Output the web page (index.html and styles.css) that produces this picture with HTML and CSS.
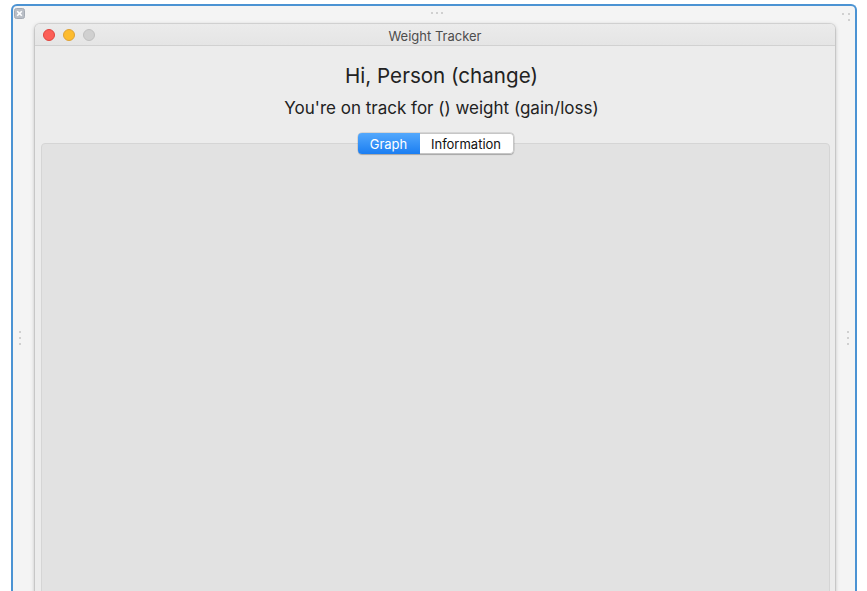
FILE: index.html
```html
<!DOCTYPE html>
<html>
<head>
<meta charset="utf-8">
<link rel="stylesheet" href="styles.css">
</head>
<body>
<div class="frame">
  <div class="frame-close"><svg width="11" height="11" viewBox="0 0 11 11"><rect x="0.5" y="0.5" width="10" height="10" rx="2" fill="#b9bec6" stroke="#a4aab3"/><path d="M3.2 3.2 L7.8 7.8 M7.8 3.2 L3.2 7.8" stroke="#fff" stroke-width="1.6"/></svg></div>
  <div class="frame-dots-top"><i></i><i></i><i></i></div>
  <div class="frame-dots-corner"><i class="a"></i><i class="b"></i><i class="c"></i></div>
  <div class="frame-dots-side left"><i></i><i></i><i></i></div>
  <div class="frame-dots-side right"><i></i><i></i><i></i></div>
  <div class="window">
    <div class="titlebar">
      <div class="lights"><span class="red"></span><span class="yellow"></span><span class="gray"></span></div>
      <div class="title">Weight Tracker</div>
    </div>
    <div class="body">
      <h1 class="greeting">Hi, Person (change)</h1>
      <p class="status">You're on track for () weight (gain/loss)</p>
      <div class="tabs">
        <div class="segmented">
          <span class="seg active">Graph</span>
          <span class="seg">Information</span>
        </div>
      </div>
      <div class="tabbox"></div>
    </div>
  </div>
</div>
</body>
</html>
```
FILE: styles.css
```css
html, body {
  margin: 0;
  padding: 0;
  background: #ffffff;
  overflow: hidden;
  height: 591px;
}
body {
  font-family: Inter, Roboto, "Liberation Sans", sans-serif;
}
.frame {
  position: relative;
  box-sizing: border-box;
  margin: 4px 0 0 11px;
  width: 846px;
  height: 587px;
  border: 2px solid #4b93d3;
  border-bottom: none;
  border-radius: 6px 6px 0 0;
  background: #f4f4f4;
  padding: 18px 20px 0 22px;
  overflow: hidden;
}
.frame-close {
  position: absolute;
  left: 1px;
  top: 2px;
  width: 11px;
  height: 11px;
}
.frame-close svg { display: block; }
.frame-dots-top {
  position: absolute;
  top: 6px;
  left: 418px;
  display: flex;
  gap: 3px;
}
.frame-dots-top i, .frame-dots-side i, .frame-dots-corner i {
  display: block;
  width: 2px;
  height: 2px;
  border-radius: 1px;
  background: #c4c4c4;
}
.frame-dots-corner i { position: absolute; }
.frame-dots-corner { position: absolute; right: 5px; top: 7px; width: 8px; height: 9px; }
.frame-dots-corner .a { left: 0; top: 0; }
.frame-dots-corner .b { left: 6px; top: 0; }
.frame-dots-corner .c { left: 6px; top: 6px; }
.frame-dots-side {
  position: absolute;
  top: 325px;
  display: flex;
  flex-direction: column;
  gap: 4px;
}
.frame-dots-side.left { left: 6px; }
.frame-dots-side.right { right: 6px; }
.window {
  width: 800px;
  height: 600px;
  background: #ececec;
  border-radius: 5px 5px 0 0;
  box-shadow: 0 0 0 1px rgba(0,0,0,0.08), 0 1px 4px rgba(0,0,0,0.28);
  display: flex;
  flex-direction: column;
}
.titlebar {
  position: relative;
  height: 21px;
  background: linear-gradient(#ebebeb, #e5e5e5);
  border-bottom: 1px solid #d1d1d1;
  border-radius: 5px 5px 0 0;
  display: flex;
  align-items: center;
  justify-content: center;
}
.lights {
  position: absolute;
  left: 8px;
  top: 5px;
  display: flex;
  gap: 8px;
}
.lights span {
  width: 12px;
  height: 12px;
  border-radius: 50%;
  box-sizing: border-box;
}
.lights .red { background: #fc5f57; border: 1px solid #e0443e; }
.lights .yellow { background: #fdbc2e; border: 1px solid #dea236; }
.lights .gray { background: #d0d0d0; border: 1px solid #c0c0c0; }
.title {
  font-size: 13px;
  color: #4d4d4d;
  padding-top: 3px;
}
.body {
  flex: 1;
  padding: 0 5px 0 6px;
  display: flex;
  flex-direction: column;
}
.greeting {
  margin: 17px 0 0 0;
  font-weight: 400;
  font-size: 20.6px;
  line-height: 26px;
  color: #222;
  text-align: center;
  padding-left: 12px;
}
.status {
  margin: 8px 0 0 0;
  font-size: 17px;
  line-height: 22px;
  color: #222;
  text-align: center;
  padding-left: 12px;
}
.tabs {
  margin-top: 14px;
  display: flex;
  justify-content: center;
  position: relative;
  z-index: 1;
}
.segmented {
  display: flex;
  height: 21px;
  border-radius: 4px;
  overflow: hidden;
  box-shadow: 0 0 0 0.5px rgba(0,0,0,0.15), 0 0.5px 1px rgba(0,0,0,0.2);
}
.seg {
  font-size: 13px;
  line-height: 20px;
  display: flex;
  align-items: center;
  justify-content: center;
  box-sizing: border-box;
}
.seg.active {
  width: 62px;
  color: #fff;
  background: linear-gradient(#53a8fc, #1b7ef2);
}
.seg:not(.active) {
  width: 94px;
  color: #111;
  background: #fff;
  border: 1px solid #c6c6c6;
  border-left: none;
  border-radius: 0 4px 4px 0;
}
.tabbox {
  margin-top: -11px;
  flex: 1;
  background: #e2e2e2;
  border: 1px solid #d5d5d5;
  border-radius: 4px;
}
```
